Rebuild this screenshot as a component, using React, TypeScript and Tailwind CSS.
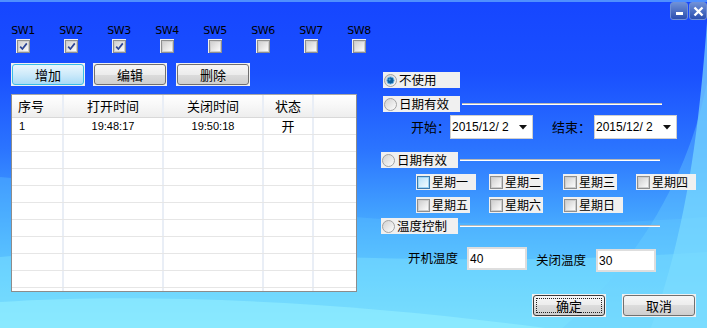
import React from "react";

function Check({ checked = false, focus = false }: { checked?: boolean; focus?: boolean }) {
  return (
    <span
      className={`flex h-[13px] w-[13px] shrink-0 items-center justify-center border ${
        focus ? "border-[#3d7bad] bg-[#dff2fd]" : "border-[#8e8f8f] bg-white"
      }`}
    >
      <span
        className={`relative flex h-[11px] w-[11px] items-center justify-center border ${
          focus
            ? "border-[#9fd6f5] bg-[linear-gradient(135deg,#b9e3fa,#f2fbff)]"
            : "border-[#cdcdcd] bg-[linear-gradient(135deg,#d0d0d0,#fcfcfc)]"
        }`}
      >
        {checked && (
          <svg width="9" height="9" viewBox="0 0 9 9" className="absolute">
            <path d="M1.2 4.6 L3.4 7 L7.8 1.4" fill="none" stroke="#2b4596" strokeWidth="1.7" />
          </svg>
        )}
      </span>
    </span>
  );
}

function Radio({ on = false }: { on?: boolean }) {
  return (
    <svg width="13" height="13" viewBox="0 0 13 13" className="shrink-0">
      <defs>
        <linearGradient id={on ? "rgOn" : "rgOff"} x1="0" y1="0" x2="1" y2="1">
          <stop offset="0" stopColor="#cfcfcf" />
          <stop offset="1" stopColor="#ffffff" />
        </linearGradient>
      </defs>
      <circle cx="6.5" cy="6.5" r="6" fill={`url(#${on ? "rgOn" : "rgOff"})`} stroke="#a2a2a2" />
      {on && <circle cx="6.5" cy="6.5" r="3.6" fill="#0d5f9f" stroke="#6cb6e6" strokeWidth="1" />}
      {on && <circle cx="5.6" cy="5.6" r="1.1" fill="#4fa6e0" />}
    </svg>
  );
}

function Btn({ label, focus = false, def = false }: { label: string; focus?: boolean; def?: boolean }) {
  return (
    <div className="h-[23px] w-[74px] bg-[#f0f0f0] p-[1px]">
      <div
        className={`flex h-full items-center justify-center rounded-[3px] border text-[13px] ${
          focus
            ? "border-[#3cbde6] bg-[linear-gradient(#eaf7fd,#cdeafa_50%,#a9dbf6)]"
            : def
            ? "border-[#3c3c3c] bg-[linear-gradient(#f6f6f6,#ececec_50%,#dcdcdc_50%,#cfcfcf)]"
            : "border-[#707070] bg-[linear-gradient(#f6f6f6,#ececec_50%,#dcdcdc_50%,#cfcfcf)]"
        }`}
      >
        {def ? (
          <div className="flex h-[15px] w-[66px] items-center justify-center border border-dotted border-[#222]">{label}</div>
        ) : (
          label
        )}
      </div>
    </div>
  );
}

function RadioLabel({ label, on = false }: { label: string; on?: boolean }) {
  return (
    <div className="flex h-[16px] w-[77px] shrink-0 items-center gap-[2px] whitespace-nowrap bg-[#f0f0f0] pl-[1px] text-[12.5px] leading-none">
      <Radio on={on} />
      <span>{label}</span>
    </div>
  );
}

function GroupTitle({ label, on = false }: { label: string; on?: boolean }) {
  return (
    <div className="flex items-center">
      <RadioLabel label={label} on={on} />
      <div className="ml-[2px] h-[2px] w-[200px] border-t border-[#b8b8b8] bg-white" />
    </div>
  );
}

function DayBox({ label, focus = false, w = "w-[60px]" }: { label: string; focus?: boolean; w?: string }) {
  return (
    <div className={`flex h-[16px] ${w} items-center gap-[2px] whitespace-nowrap bg-[#f0f0f0] pl-[1px] text-[12px] leading-none`}>
      <Check focus={focus} />
      <span>{label}</span>
    </div>
  );
}

function DateBox({ value }: { value: string }) {
  return (
    <div className="flex h-[24px] w-[83px] items-center justify-between border border-[#cfcfcf] bg-white pl-[1px] pr-[5px] text-[12px] font-['Liberation_Sans',sans-serif]">
      <span className="whitespace-pre">{value}</span>
      <svg width="8" height="5" viewBox="0 0 8 5">
        <path d="M0 0 H8 L4 4.5 Z" fill="#111" />
      </svg>
    </div>
  );
}

const sws = ["SW1", "SW2", "SW3", "SW4", "SW5", "SW6", "SW7", "SW8"];
const rows = [
  ["1", "19:48:17", "19:50:18", "开"],
  ["", "", "", ""],
  ["", "", "", ""],
  ["", "", "", ""],
  ["", "", "", ""],
  ["", "", "", ""],
  ["", "", "", ""],
  ["", "", "", ""],
  ["", "", "", ""],
  ["", "", "", ""],
  ["", "", "", ""],
];

export default function App() {
  return (
    <div className="relative h-[328px] w-[707px] overflow-hidden border-t-2 border-[#4f8fff] bg-[linear-gradient(180deg,#1646ff_0%,#1a50ff_22%,#2b74ff_45%,#42a2ff_65%,#62cfff_85%,#84eafc_100%)] font-['Noto_Sans_CJK_SC','Liberation_Sans',sans-serif] text-black">
      <svg className="absolute inset-0" width="707" height="328" viewBox="0 0 707 328">
        <path d="M0 175 C180 190 380 240 707 215 L707 328 L0 328 Z" fill="#5cc4ff" opacity="0.35" />
        <path d="M0 255 C170 240 420 270 707 250 L707 328 L0 328 Z" fill="#7fe2ff" opacity="0.45" />
        <path d="M0 300 C150 290 360 300 560 328 L0 328 Z" fill="#9af4ff" opacity="0.5" />
        <path d="M707 20 C700 110 690 220 650 328 L707 328 Z" fill="#86e4ff" opacity="0.65" />
        <path d="M707 80 C690 170 640 260 560 328 L707 328 Z" fill="#6cd2ff" opacity="0.35" />
      </svg>

      <div className="relative flex flex-col">
        <div className="flex h-[18px] justify-end">
          <div className="flex h-[18px] w-[18px] items-end justify-center rounded-[3px] border border-[#6f8fd8] bg-[linear-gradient(#6d8fd6,#2c4fb0)] pb-[4px]">
            <div className="h-[3px] w-[7px] bg-white" />
          </div>
          <div className="ml-[1px] flex h-[18px] w-[18px] items-center justify-center rounded-[3px] border border-[#6f8fd8] bg-[linear-gradient(#6d8fd6,#2c4fb0)]">
            <svg width="11" height="11" viewBox="0 0 11 11">
              <path d="M1.5 1.5 L9.5 9.5 M9.5 1.5 L1.5 9.5" stroke="#fff" strokeWidth="2.4" />
            </svg>
          </div>
        </div>

        <div className="flex">
          <div className="flex w-[360px] shrink-0 flex-col pl-[9px]">
            <div className="mt-[4px] flex gap-[20px]">
              {sws.map((s, i) => (
                <div key={s} className="flex w-[28px] shrink-0 flex-col items-center">
                  <span className="text-[11px] leading-[13px] font-['DejaVu_Sans',sans-serif] tracking-[-0.5px]">{s}</span>
                  <div className="mt-[2px] flex h-[14px] w-[14px] items-center justify-center bg-[#f0f0f0]">
                    <Check checked={i < 3} />
                  </div>
                </div>
              ))}
            </div>

            <div className="ml-[2px] mt-[10px] flex">
              <Btn label="增加" focus />
              <div className="ml-[8px]">
                <Btn label="编辑" />
              </div>
              <div className="ml-[9px]">
                <Btn label="删除" />
              </div>
            </div>

            <div className="ml-[2px] mt-[8px] h-[198px] w-[346px] overflow-hidden border border-[#8c8c8c] border-t-[#a8a8a8] bg-white">
              <div className="flex h-[23px] border-b border-[#d9d9d9] bg-[linear-gradient(#ffffff,#f7f7f7_50%,#eeeeee)] text-[13px]">
                <div className="flex w-[52px] items-center border-r-2 border-[#e9eef6] pl-[6px]">序号</div>
                <div className="flex w-[100px] items-center justify-center border-r-2 border-[#e9eef6]">打开时间</div>
                <div className="flex w-[100px] items-center justify-center border-r-2 border-[#e9eef6]">关闭时间</div>
                <div className="flex w-[50px] items-center justify-center border-r-2 border-[#e9eef6]">状态</div>
                <div className="flex-1" />
              </div>
              {rows.map((r, i) => (
                <div key={i} className="flex h-[17px] border-b border-[#e6e6e6] text-[11px]">
                  <div className="flex w-[52px] items-center border-r-2 border-[#e9eef6] pl-[7px] font-['Liberation_Sans',sans-serif]">{r[0]}</div>
                  <div className="flex w-[100px] items-center justify-center border-r-2 border-[#e9eef6] font-['Liberation_Sans',sans-serif]">{r[1]}</div>
                  <div className="flex w-[100px] items-center justify-center border-r-2 border-[#e9eef6] font-['Liberation_Sans',sans-serif]">{r[2]}</div>
                  <div className="flex w-[50px] items-center justify-center border-r-2 border-[#e9eef6] text-[13px]">{r[3]}</div>
                  <div className="flex-1" />
                </div>
              ))}
            </div>
          </div>

          <div className="ml-[23px] flex flex-col pt-[52px]">
            <RadioLabel label="不使用" on />

            <div className="mt-[8px]">
              <GroupTitle label="日期有效" />
            </div>

            <div className="mt-[3px] flex items-center text-[13px]">
              <span className="ml-[28px] w-[39px]">开始：</span>
              <DateBox value="2015/12/ 2" />
              <span className="ml-[19px] w-[42px]">结束：</span>
              <DateBox value="2015/12/ 2" />
            </div>

            <div className="-ml-[2px] mt-[13px]">
              <GroupTitle label="日期有效" />
            </div>

            <div className="ml-[33px] mt-[6px] flex">
              <DayBox label="星期一" focus />
              <div className="ml-[13px]">
                <DayBox label="星期二" w="w-[54px]" />
              </div>
              <div className="ml-[20px]">
                <DayBox label="星期三" w="w-[54px]" />
              </div>
              <div className="ml-[19px]">
                <DayBox label="星期四" />
              </div>
            </div>
            <div className="ml-[33px] mt-[7px] flex">
              <DayBox label="星期五" w="w-[54px]" />
              <div className="ml-[19px]">
                <DayBox label="星期六" w="w-[54px]" />
              </div>
              <div className="ml-[20px]">
                <DayBox label="星期日" />
              </div>
            </div>

            <div className="-ml-[2px] mt-[5px]">
              <GroupTitle label="温度控制" />
            </div>

            <div className="mt-[13px] flex items-start text-[12.5px]">
              <span className="ml-[25px] mt-[2px] w-[59px] whitespace-nowrap">开机温度</span>
              <div className="flex h-[23px] w-[60px] items-center border-2 border-[#dedede] bg-white pl-[1px] text-[12px] font-['Liberation_Sans',sans-serif]">40</div>
              <span className="ml-[9px] mt-[4px] w-[60px] whitespace-nowrap">关闭温度</span>
              <div className="mt-[2px] flex h-[23px] w-[60px] items-center border-2 border-[#dedede] bg-white pl-[1px] text-[12px] font-['Liberation_Sans',sans-serif]">30</div>
            </div>

            <div className="ml-[149px] mt-[22px] flex">
              <Btn label="确定" def />
              <div className="ml-[16px]">
                <Btn label="取消" />
              </div>
            </div>
          </div>
        </div>
      </div>
    </div>
  );
}
